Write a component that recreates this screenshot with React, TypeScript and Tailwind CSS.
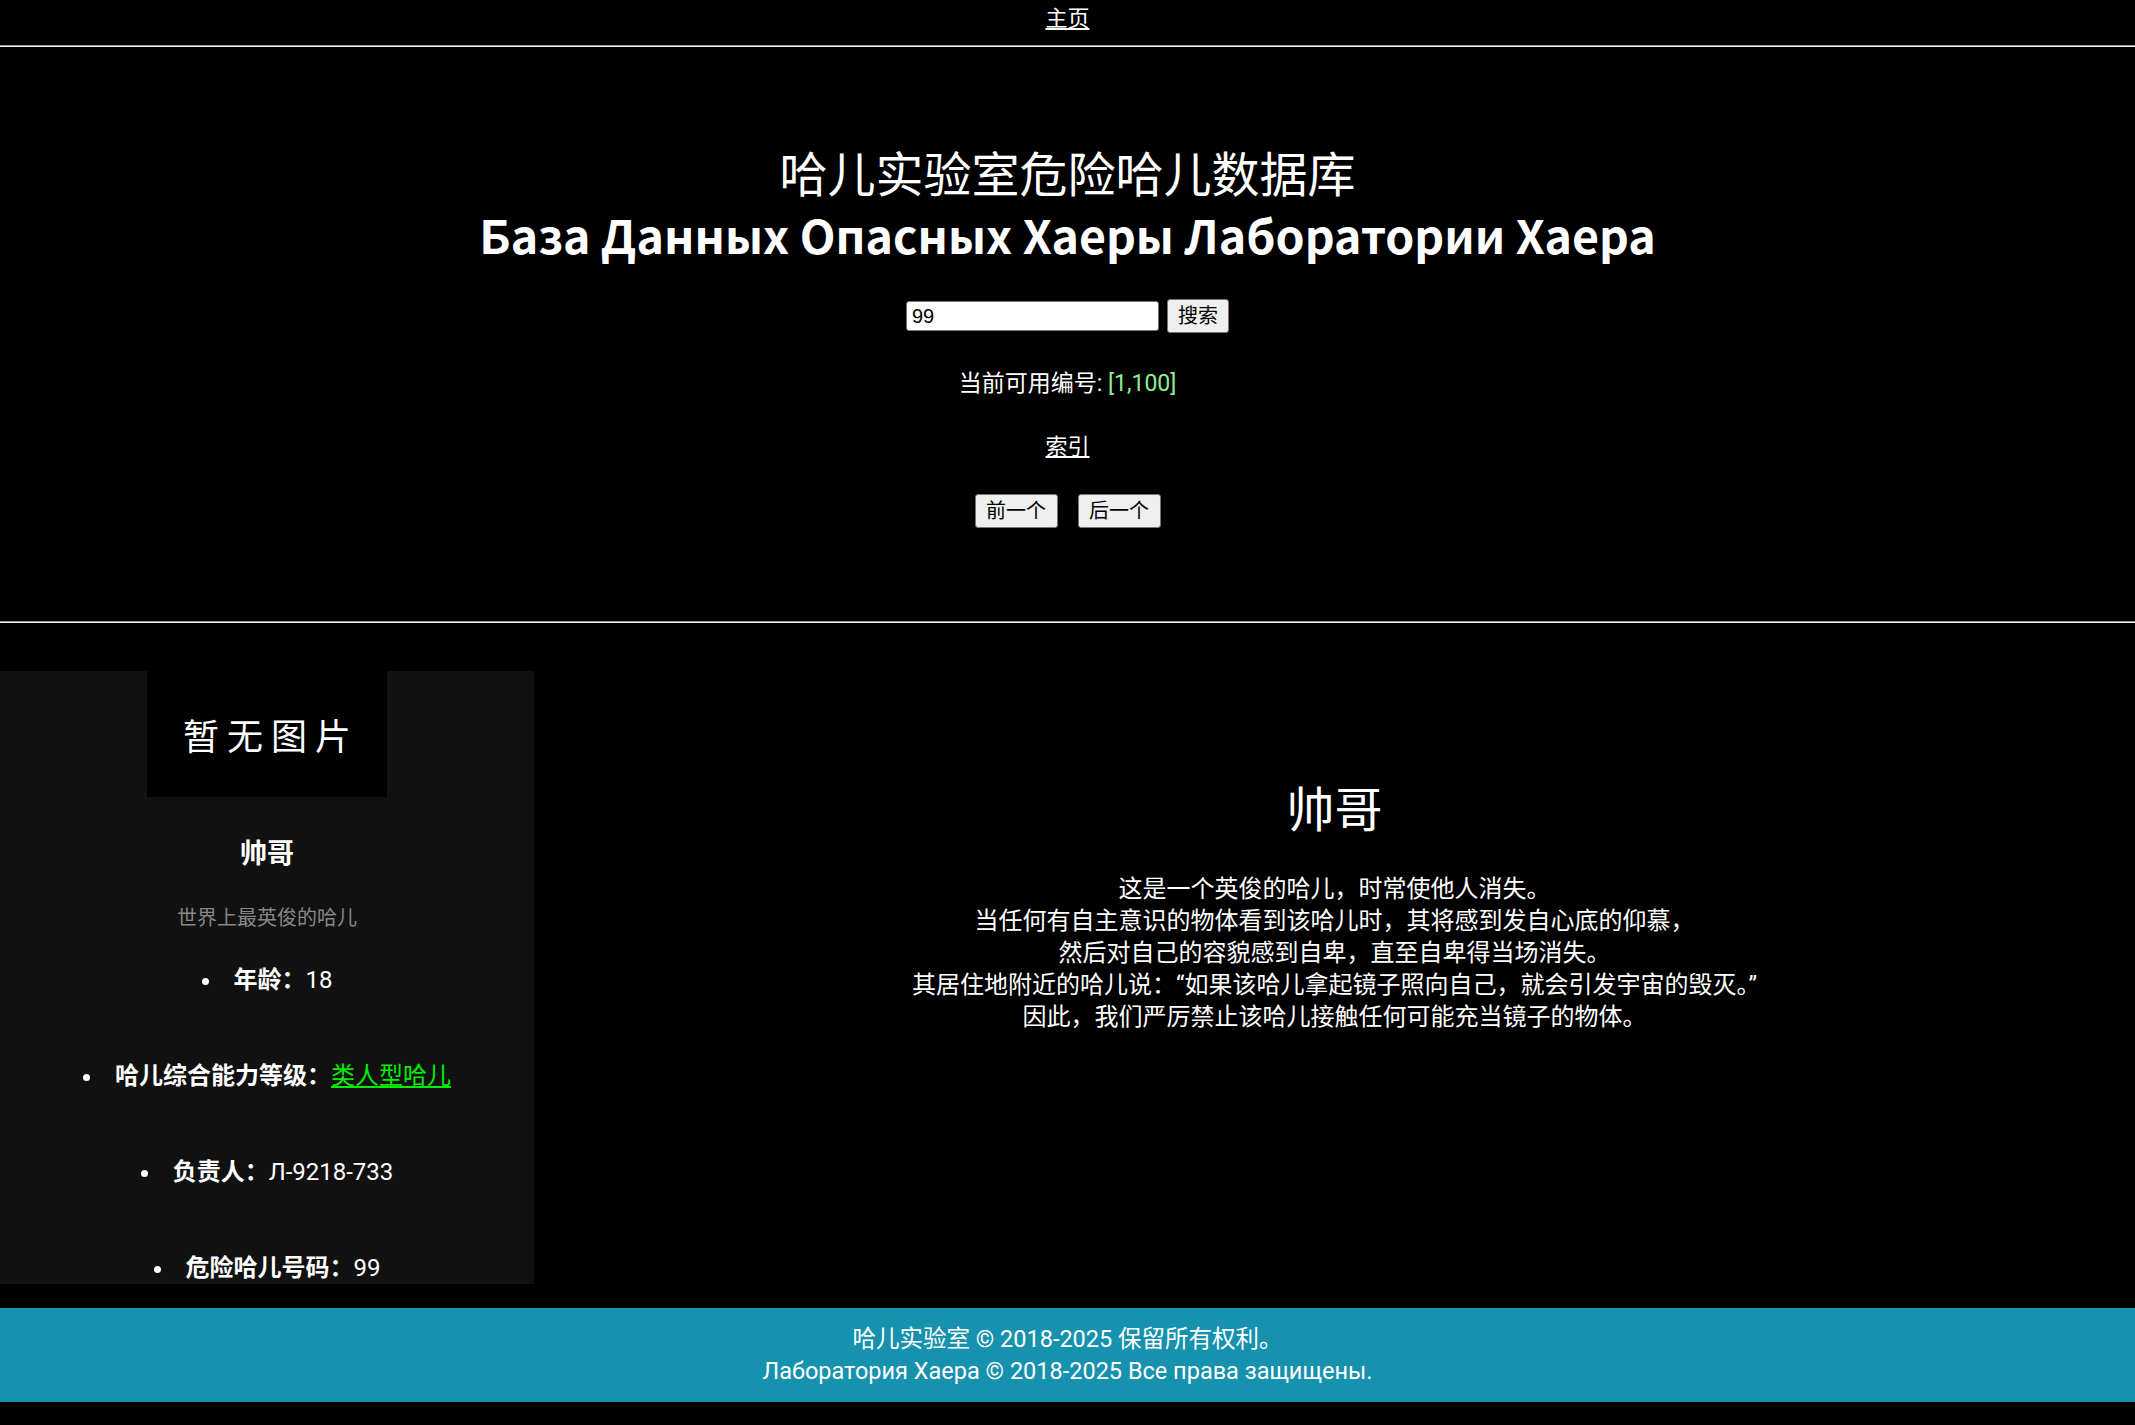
import React from "react";

const FONT = { fontFamily: 'Roboto, "Noto Sans CJK SC", sans-serif' };

const Rule: React.FC = () => (
  <div className="h-[2px] border-t border-t-[#9a9a9a] border-b border-b-[#eeeeee]" />
);

const Field: React.FC<{ label: string; children: React.ReactNode }> = ({ label, children }) => (
  <li className="list-disc list-inside text-[24px] leading-[32px]">
    <span className="font-bold">{label}：</span>
    {children}
  </li>
);

export default function App() {
  return (
    <div className="min-h-screen bg-black text-white" style={FONT}>
      <nav className="h-[45px] flex justify-center pt-[4px]">
        <a href="#" className="text-[22px] leading-[30px] underline underline-offset-2">
          主页
        </a>
      </nav>
      <Rule />

      <header className="flex flex-col items-center text-center">
        <h1 className="mt-[101px] text-[48px] leading-[56px] font-normal">哈儿实验室危险哈儿数据库</h1>
        <h1
          className="text-[46.5px] leading-[60px] font-bold"
          style={{ fontFamily: '"Noto Sans CJK SC", sans-serif' }}
        >
          База Данных Опасных Хаеры Лаборатории Хаера
        </h1>

        <form className="mt-[35px] flex items-center gap-[8px]" onSubmit={(e) => e.preventDefault()}>
          <input
            defaultValue="99"
            className="w-[253px] h-[30px] bg-white text-black rounded-[3px] border border-[#767676] px-[5px] text-[20px] leading-[28px]"
            style={{ fontFamily: '"Liberation Sans", Arial, sans-serif' }}
          />
          <button className="w-[62px] h-[34px] bg-[#efefef] text-black rounded-[3px] border border-[#767676] text-[20px] leading-[30px]">
            搜索
          </button>
        </form>

        <p className="mt-[35px] text-[23px] leading-[32px]">
          当前可用编号: <span className="text-[#90ee90]">[1,100]</span>
        </p>

        <a href="#" className="mt-[31px] text-[22px] leading-[32px] underline underline-offset-2">
          索引
        </a>

        <div className="mt-[31px] mb-[93px] flex gap-[20px]">
          <button className="w-[83px] h-[34px] bg-[#efefef] text-black rounded-[3px] border border-[#767676] text-[20px] leading-[30px]">
            前一个
          </button>
          <button className="w-[83px] h-[34px] bg-[#efefef] text-black rounded-[3px] border border-[#767676] text-[20px] leading-[30px]">
            后一个
          </button>
        </div>
      </header>
      <Rule />

      <main className="mt-[48px] flex">
        <aside className="w-[534px] h-[613px] shrink-0 bg-[#111111] overflow-hidden flex flex-col items-center text-center">
          <div className="w-[240px] h-[130px] bg-black flex items-center justify-center pt-[8px]">
            <span className="text-[36px] tracking-[8px] pl-[8px]">暂无图片</span>
          </div>
          <h3 className="mt-[41px] text-[27px] leading-[32px] font-bold">帅哥</h3>
          <p className="mt-[32px] text-[20px] leading-[32px] text-[#888888]">世界上最英俊的哈儿</p>
          <ul className="mt-[30px] flex flex-col gap-[64px]">
            <Field label="年龄">18</Field>
            <Field label="哈儿综合能力等级">
              <a href="#" className="text-[#00ee00] font-normal underline underline-offset-2">类人型哈儿</a>
            </Field>
            <Field label="负责人">Л-9218-733</Field>
            <Field label="危险哈儿号码">99</Field>
          </ul>
        </aside>

        <section className="flex-1 flex flex-col items-center text-center">
          <h2 className="mt-[110px] text-[48px] leading-[60px] font-normal">帅哥</h2>
          <p className="mt-[32px] text-[24px] leading-[32px]">
            这是一个英俊的哈儿，时常使他人消失。
            <br />
            当任何有自主意识的物体看到该哈儿时，其将感到发自心底的仰慕，
            <br />
            然后对自己的容貌感到自卑，直至自卑得当场消失。
            <br />
            其居住地附近的哈儿说：“如果该哈儿拿起镜子照向自己，就会引发宇宙的毁灭。”
            <br />
            因此，我们严厉禁止该哈儿接触任何可能充当镜子的物体。
          </p>
        </section>
      </main>

      <footer className="mt-[24px] h-[94px] bg-[#1691ae] flex flex-col items-center justify-center text-[23.5px] leading-[32px]">
        <p>哈儿实验室 © 2018-2025 保留所有权利。</p>
        <p>Лаборатория Хаера © 2018-2025 Все права защищены.</p>
      </footer>
      <div className="h-[23px]" />
    </div>
  );
}
